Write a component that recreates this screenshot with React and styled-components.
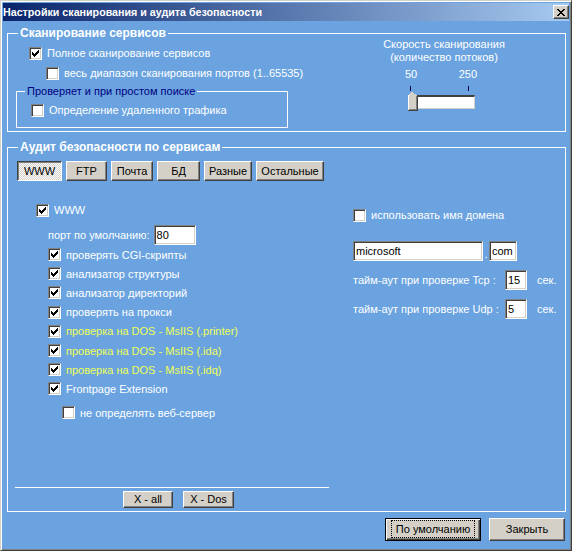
import React from "react";
import styled, { createGlobalStyle } from "styled-components";

const GlobalStyle = createGlobalStyle`
  body {
    margin: 0;
    font-family: "Liberation Sans", Arial, sans-serif;
    font-size: 11px;
  }
`;

const Window = styled.div`
  width: 572px;
  height: 551px;
  box-sizing: border-box;
  background: #6aa3df;
  border: 1px solid;
  border-color: #d4d0c8 #404040 #404040 #d4d0c8;
  box-shadow: inset 1px 1px #fff, inset -1px -1px #808080;
  padding: 2px;
  display: flex;
  flex-direction: column;
  overflow: hidden;
`;

const TitleBar = styled.div`
  height: 18px;
  display: flex;
  align-items: center;
  justify-content: space-between;
  background: linear-gradient(to right, #0a246a, #a6caf0);
`;

const TitleText = styled.span`
  color: #fff;
  font-weight: bold;
  font-size: 10.7px;
  line-height: 18px;
`;

const CloseBtn = styled.div`
  width: 16px;
  height: 14px;
  box-sizing: border-box;
  background: #d4d0c8;
  border: 1px solid;
  border-color: #fff #404040 #404040 #fff;
  box-shadow: inset -1px -1px #808080;
  display: flex;
  align-items: center;
  justify-content: center;
`;

const Body = styled.div`
  padding: 5px 3px 0 4px;
  display: flex;
  flex-direction: column;
`;

const Group = styled.fieldset`
  margin: ${(p) => p.$mt || 0}px 0 0 0;
  padding: 0 0 ${(p) => p.$pb || 0}px 0;
  border: 1px solid #fff;
  min-width: 0;
  width: 559px;
  box-sizing: border-box;
`;

const Legend = styled.legend`
  margin-left: 10px;
  padding: 0 2px;
  color: #fff;
  font-weight: bold;
  font-size: 12px;
  line-height: 14px;
`;

const SubGroup = styled.fieldset`
  margin: 3px 0 0 8px;
  padding: 0 0 9px 0;
  border: 1px solid #fff;
  width: 272px;
  box-sizing: border-box;
  min-width: 0;
`;

const SubLegend = styled.legend`
  margin-left: 8px;
  padding: 0 2px;
  color: #000080;
  font-size: 11px;
  line-height: 14px;
`;

const ScanRow = styled.div`
  display: flex;
`;

const ScanLeft = styled.div`
  width: 300px;
  display: flex;
  flex-direction: column;
`;

const Row = styled.label`
  display: flex;
  align-items: center;
  height: ${(p) => p.$h || 16}px;
  margin-top: ${(p) => p.$mt || 0}px;
  padding-left: ${(p) => p.$indent || 0}px;
  color: ${(p) => (p.$yellow ? "#eeff55" : "#fff")};
  white-space: nowrap;
  font-size: 11px;
`;

const Box = styled.span`
  width: 13px;
  height: 13px;
  box-sizing: border-box;
  flex: none;
  background: #fff;
  border: 1px solid;
  border-color: #808080 #fff #fff #808080;
  box-shadow: inset 1px 1px #404040, inset -1px -1px #d4d0c8;
  display: flex;
  align-items: center;
  justify-content: center;
  margin-right: 5px;
`;

const Check = ({ on }) => (
  <Box>
    {on && (
      <svg width="7" height="7" viewBox="0 0 7 7" shapeRendering="crispEdges">
        <path
          d="M6 0h1v3h-1v1h-1v1h-1v1h-1v1h-1v-1h-1v-1h-1v-3h1v1h1v1h1v-1h1v-1h1z"
          fill="#000"
        />
      </svg>
    )}
  </Box>
);

const SpeedBox = styled.div`
  width: 160px;
  margin-left: 56px;
  display: flex;
  flex-direction: column;
  align-items: center;
  color: #fff;
  margin-top: -2px;
`;

const SpeedLine = styled.div`
  line-height: 13px;
  font-size: 11px;
`;

const Scale = styled.div`
  width: 72px;
  margin-top: 4px;
  margin-left: -6px;
  display: flex;
  justify-content: space-between;
  line-height: 13px;
`;

const Ticks = styled.div`
  width: 72px;
  margin-top: 5px;
  margin-left: -6px;
  height: 5px;
  display: flex;
  justify-content: space-between;
  padding: 0 8px 0 5px;
  box-sizing: border-box;
  span {
    width: 1px;
    height: 5px;
    background: #000040;
  }
`;

const Slider = styled.div`
  width: 72px;
  margin-top: 1px;
  display: flex;
  align-items: center;
  margin-left: 0;
`;

const Thumb = styled.svg`
  width: 10px;
  height: 19px;
  position: relative;
  z-index: 1;
  flex: none;
`;

const Track = styled.div`
  width: 62px;
  height: 14px;
  box-sizing: border-box;
  margin-left: -5px;
  background: #fff;
  border-top: 2px solid #404040;
  border-left: 1px solid #808080;
  border-right: 1px solid #d4d0c8;
  border-bottom: 1px solid #d4d0c8;
`;

const Tabs = styled.div`
  display: flex;
  gap: 4px;
  margin: 7px 0 0 9px;
`;

const Button = styled.button`
  height: ${(p) => p.$h || 20}px;
  width: ${(p) => p.$w}px;
  padding: 0;
  font-family: "Liberation Sans", Arial, sans-serif;
  font-size: 11px;
  color: #000;
  background: #d4d0c8;
  border: 1px solid;
  border-color: #fff #404040 #404040 #fff;
  box-shadow: inset -1px -1px #808080;
  box-sizing: border-box;
`;

const TabButton = styled(Button)`
  ${(p) =>
    p.$active &&
    `
    border-color: #404040 #fff #fff #404040;
    box-shadow: inset 1px 1px #808080;
    background: repeating-conic-gradient(#d4d0c8 0 25%, #fff 0 50%) 0 0 / 2px 2px;
  `}
`;

const DefaultButton = styled(Button)`
  border: 1px solid #000;
  box-shadow: inset 1px 1px #fff, inset -1px -1px #404040, inset -2px -2px #808080;
  display: flex;
  align-items: center;
  justify-content: center;
  span {
    border: 1px dotted #000;
    padding: 2px 4px;
    line-height: 12px;
  }
`;

const AuditRow = styled.div`
  display: flex;
`;

const AuditLeft = styled.div`
  width: 345px;
  display: flex;
  flex-direction: column;
`;

const AuditRight = styled.div`
  display: flex;
  flex-direction: column;
  color: #fff;
`;

const Field = styled.div`
  height: 20px;
  width: ${(p) => p.$w}px;
  box-sizing: border-box;
  background: #fff;
  border: 1px solid;
  border-color: #808080 #fff #fff #808080;
  box-shadow: inset 1px 1px #404040, inset -1px -1px #d4d0c8;
  color: #000;
  font-size: 11px;
  line-height: 18px;
  padding-left: 2px;
  flex: none;
`;

const PortRow = styled.div`
  display: flex;
  align-items: center;
  margin-top: 7px;
  padding-left: 40px;
  color: #fff;
  gap: 4px;
`;

const Divider = styled.div`
  margin: 66px 0 0 7px;
  width: 314px;
  height: 1px;
  background: #fff;
`;

const XButtons = styled.div`
  display: flex;
  gap: 10px;
  margin: 3px 0 0 115px;
`;

const DomainRow = styled.div`
  display: flex;
  align-items: flex-end;
  margin-top: 18px;
  span {
    width: 6px;
    text-align: center;
    line-height: 14px;
  }
`;

const TimeoutRow = styled.div`
  display: flex;
  align-items: center;
  margin-top: 9px;
`;

const TimeoutLabel = styled.span`
  width: 152px;
  white-space: nowrap;
`;

const Unit = styled.span`
  margin-left: 10px;
`;

const Footer = styled.div`
  display: flex;
  justify-content: flex-end;
  gap: 8px;
  margin-top: 6px;
  padding-right: 1px;
`;

const wwwItems = [
  { text: "проверять CGI-скрипты" },
  { text: "анализатор структуры" },
  { text: "анализатор директорий" },
  { text: "проверять на прокси" },
  { text: "проверка на DOS - MsIIS (.printer)", yellow: true },
  { text: "проверка на DOS - MsIIS (.ida)", yellow: true },
  { text: "проверка на DOS - MsIIS (.idq)", yellow: true },
  { text: "Frontpage Extension" },
];

const tabs = [
  { label: "WWW", w: 45, active: true },
  { label: "FTP", w: 41 },
  { label: "Почта", w: 42 },
  { label: "БД", w: 43 },
  { label: "Разные", w: 48 },
  { label: "Остальные", w: 68 },
];

export default function App() {
  return (
    <>
      <GlobalStyle />
      <Window>
        <TitleBar>
          <TitleText>Настройки сканирования и аудита безопасности</TitleText>
          <CloseBtn>
            <svg width="8" height="7" viewBox="0 0 8 7" shapeRendering="crispEdges">
              <path d="M0 0h2v1h1v1h2v-1h1v-1h2v1h-1v1h-1v1h-1v1h1v1h1v1h1v1h-2v-1h-1v-1h-2v1h-1v1h-2v-1h1v-1h1v-1h1v-1h-1v-1h-1z" fill="#000" />
            </svg>
          </CloseBtn>
        </TitleBar>
        <Body>
          <Group $pb={3}>
            <Legend>Сканирование сервисов</Legend>
            <ScanRow>
              <ScanLeft>
                <Row $indent={21} $mt={5}>
                  <Check on />
                  Полное сканирование сервисов
                </Row>
                <Row $indent={38} $mt={4}>
                  <Check />
                  весь диапазон сканирования портов (1..65535)
                </Row>
                <SubGroup>
                  <SubLegend>Проверяет и при простом поиске</SubLegend>
                  <Row $indent={14} $mt={4}>
                    <Check />
                    Определение удаленного трафика
                  </Row>
                </SubGroup>
              </ScanLeft>
              <SpeedBox>
                <SpeedLine>Скорость сканирования</SpeedLine>
                <SpeedLine>(количество потоков)</SpeedLine>
                <Scale>
                  <span>50</span>
                  <span>250</span>
                </Scale>
                <Ticks>
                  <span />
                  <span />
                </Ticks>
                <Slider>
                  <Thumb viewBox="0 0 10 19" shapeRendering="crispEdges">
                    <path d="M0 3L4 0L9 3V19H0Z" fill="#d4d0c8" />
                    <path d="M0 3V18" stroke="#fff" strokeWidth="1" />
                    <path d="M9.5 3V19M0 18.5H10" stroke="#404040" strokeWidth="1" />
                    <path d="M8.5 4V18M1 17.5H9" stroke="#808080" strokeWidth="1" />
                  </Thumb>
                  <Track />
                </Slider>
              </SpeedBox>
            </ScanRow>
          </Group>

          <Group $mt={8} $pb={3}>
            <Legend>Аудит безопасности по сервисам</Legend>
            <Tabs>
              {tabs.map((t) => (
                <TabButton key={t.label} $w={t.w} $active={t.active}>
                  {t.label}
                </TabButton>
              ))}
            </Tabs>
            <AuditRow>
              <AuditLeft>
                <Row $indent={28} $mt={21}>
                  <Check on />
                  WWW
                </Row>
                <PortRow>
                  порт по умолчанию:
                  <Field $w={42}>80</Field>
                </PortRow>
                {wwwItems.map((item) => (
                  <Row key={item.text} $indent={40} $h={19.2} $yellow={item.yellow}>
                    <Check on />
                    {item.text}
                  </Row>
                ))}
                <Row $indent={54} $mt={6}>
                  <Check />
                  не определять веб-сервер
                </Row>
                <Divider />
                <XButtons>
                  <Button $w={50} $h={17}>X - all</Button>
                  <Button $w={51} $h={17}>X - Dos</Button>
                </XButtons>
              </AuditLeft>
              <AuditRight>
                <Row $mt={26}>
                  <Check />
                  использовать имя домена
                </Row>
                <DomainRow>
                  <Field $w={130}>microsoft</Field>
                  <span>.</span>
                  <Field $w={28}>com</Field>
                </DomainRow>
                <TimeoutRow>
                  <TimeoutLabel>тайм-аут при проверке Tcp :</TimeoutLabel>
                  <Field $w={22}>15</Field>
                  <Unit>сек.</Unit>
                </TimeoutRow>
                <TimeoutRow>
                  <TimeoutLabel>тайм-аут при проверке Udp :</TimeoutLabel>
                  <Field $w={22}>5</Field>
                  <Unit>сек.</Unit>
                </TimeoutRow>
              </AuditRight>
            </AuditRow>
          </Group>

          <Footer>
            <DefaultButton $w={96} $h={23}>
              <span>По умолчанию</span>
            </DefaultButton>
            <Button $w={76} $h={23}>Закрыть</Button>
          </Footer>
        </Body>
      </Window>
    </>
  );
}
